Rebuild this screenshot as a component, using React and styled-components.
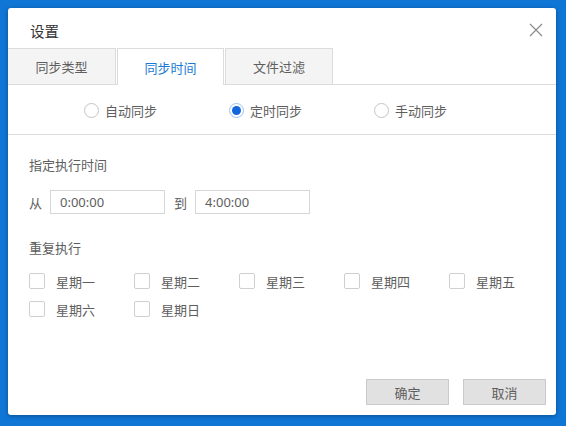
import React, { useState } from "react";
import styled, { createGlobalStyle } from "styled-components";

const GlobalStyle = createGlobalStyle`
  html, body {
    margin: 0;
    padding: 0;
    background: #0f76d6;
  }
  body {
    font-family: "Noto Sans CJK SC", "Noto Sans", sans-serif;
    font-size: 13px;
    color: #5e5e5e;
  }
`;

const Page = styled.div`
  width: 566px;
  height: 426px;
  padding: 8px 10px 11px 8px;
  box-sizing: border-box;
`;

const Dialog = styled.div`
  width: 548px;
  height: 407px;
  background: #fff;
  border-radius: 3px;
  box-shadow: 0 1px 4px rgba(0, 0, 0, 0.35);
  display: flex;
  flex-direction: column;
  overflow: hidden;
`;

const Header = styled.div`
  height: 40px;
  padding: 4px 10px 0 22px;
  box-sizing: border-box;
  display: flex;
  align-items: center;
  justify-content: space-between;
`;

const Title = styled.div`
  font-size: 14.5px;
  color: #333;
`;

const CloseButton = styled.button`
  width: 20px;
  height: 20px;
  padding: 0;
  border: none;
  background: none;
  display: flex;
  align-items: center;
  justify-content: center;
  cursor: pointer;
`;

const TabBar = styled.div`
  display: flex;
  gap: 1px;
  height: 36px;
  border-bottom: 1px solid #dcdcdc;
`;

const Tab = styled.div`
  width: 107px;
  box-sizing: border-box;
  display: flex;
  align-items: center;
  justify-content: center;
  font-size: 13px;
  background: ${(p) => (p.$active ? "#fff" : "#f4f4f4")};
  color: ${(p) => (p.$active ? "#1a7ad4" : "#5e5e5e")};
  border: 1px solid #dcdcdc;
  border-bottom: none;
  margin-bottom: ${(p) => (p.$active ? "-1px" : "0")};
  &:first-child {
    width: 108px;
    border-left: none;
  }
  &:last-child {
    width: 108px;
  }
`;

const RadioRow = styled.div`
  height: 50px;
  padding: 2px 0 0 76px;
  box-sizing: border-box;
  display: flex;
  align-items: center;
  gap: 72px;
  border-bottom: 1px solid #dcdcdc;
`;

const RadioLabel = styled.label`
  display: flex;
  align-items: center;
  gap: 6px;
  cursor: pointer;
`;

const RadioDot = styled.span`
  width: 15px;
  height: 15px;
  box-sizing: border-box;
  border-radius: 50%;
  border: 1px solid ${(p) => (p.$checked ? "#9cc3ee" : "#c4c4c4")};
  background: #fff;
  display: flex;
  align-items: center;
  justify-content: center;
  &::after {
    content: "";
    width: 9px;
    height: 9px;
    border-radius: 50%;
    background: ${(p) => (p.$checked ? "#1466dc" : "transparent")};
  }
`;

const Content = styled.div`
  padding: 20px 0 0 21px;
  display: flex;
  flex-direction: column;
`;

const SectionTitle = styled.div`
  line-height: 20px;
  margin-top: ${(p) => p.$mt || 0}px;
`;

const TimeRow = styled.div`
  margin-top: 15px;
  display: flex;
  align-items: center;
`;

const TimeLabel = styled.span`
  margin: 0 8px 0 ${(p) => p.$ml || 0}px;
`;

const TimeInput = styled.input`
  width: 115px;
  height: 24px;
  box-sizing: border-box;
  border: 1px solid #d6d6d6;
  padding: 0 9px;
  font-family: "Noto Sans", "Noto Sans CJK SC", sans-serif;
  font-size: 13px;
  color: #5e5e5e;
  outline: none;
`;

const DayGrid = styled.div`
  margin-top: 13px;
  display: grid;
  grid-template-columns: repeat(5, 105px);
  row-gap: 8px;
`;

const DayItem = styled.label`
  display: flex;
  align-items: center;
  gap: 11px;
  height: 20px;
  cursor: pointer;
`;

const CheckBox = styled.span`
  width: 16px;
  height: 16px;
  box-sizing: border-box;
  border: 1px solid #cfcfcf;
  border-radius: 2px;
  background: #fff;
`;

const Footer = styled.div`
  margin-top: auto;
  padding: 0 10px 10px 0;
  display: flex;
  justify-content: flex-end;
  gap: 14px;
`;

const Button = styled.button`
  width: 83px;
  height: 26px;
  border: 1px solid #cacaca;
  background: #e1e1e1;
  color: #5e5e5e;
  font-family: "Noto Sans CJK SC", sans-serif;
  font-size: 13px;
  cursor: pointer;
`;

const tabs = ["同步类型", "同步时间", "文件过滤"];
const modes = ["自动同步", "定时同步", "手动同步"];
const days = ["星期一", "星期二", "星期三", "星期四", "星期五", "星期六", "星期日"];

const App = () => {
  const [tab, setTab] = useState(1);
  const [mode, setMode] = useState(1);

  return (
    <Page>
      <GlobalStyle />
      <Dialog>
        <Header>
          <Title>设置</Title>
          <CloseButton aria-label="关闭">
            <svg width="14" height="14" viewBox="0 0 14 14">
              <path d="M1 1L13 13M13 1L1 13" stroke="#8a8a8a" strokeWidth="1.2" />
            </svg>
          </CloseButton>
        </Header>
        <TabBar>
          {tabs.map((t, i) => (
            <Tab key={t} $active={i === tab} onClick={() => setTab(i)}>
              {t}
            </Tab>
          ))}
        </TabBar>
        <RadioRow>
          {modes.map((m, i) => (
            <RadioLabel key={m} onClick={() => setMode(i)}>
              <RadioDot $checked={i === mode} />
              {m}
            </RadioLabel>
          ))}
        </RadioRow>
        <Content>
          <SectionTitle>指定执行时间</SectionTitle>
          <TimeRow>
            <TimeLabel>从</TimeLabel>
            <TimeInput defaultValue="0:00:00" />
            <TimeLabel $ml={9}>到</TimeLabel>
            <TimeInput defaultValue="4:00:00" />
          </TimeRow>
          <SectionTitle $mt={24}>重复执行</SectionTitle>
          <DayGrid>
            {days.map((d) => (
              <DayItem key={d}>
                <CheckBox />
                {d}
              </DayItem>
            ))}
          </DayGrid>
        </Content>
        <Footer>
          <Button>确定</Button>
          <Button>取消</Button>
        </Footer>
      </Dialog>
    </Page>
  );
};

export default App;
